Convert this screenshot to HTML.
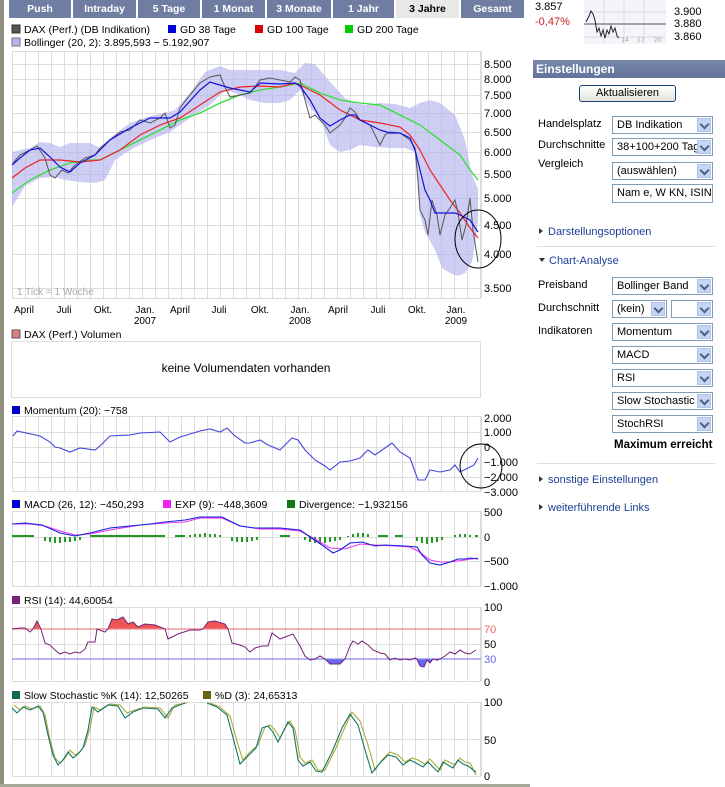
<!DOCTYPE html>
<html><head><meta charset="utf-8"><style>
*{margin:0;padding:0;box-sizing:border-box}
body{width:725px;height:787px;background:#fff;font-family:"Liberation Sans",sans-serif;font-size:11px;color:#000;position:relative;overflow:hidden}
.abs{position:absolute;white-space:nowrap}
.tab{position:absolute;top:0;height:18px;background:#6f7da3;color:#fff;font-weight:bold;font-size:10.5px;text-align:center;line-height:18px}
.tab.act{background:#e8e8e8;color:#000}
.lbl{position:absolute;font-size:11px;color:#000}
.sel{position:absolute;height:18px;border:1px solid #7f9db9;background:#fff;font-size:11px;line-height:16px;padding-left:4px;overflow:hidden;white-space:nowrap}
.sel i{position:absolute;right:1px;top:1px;width:14px;height:14px;background:#c6d4f6;border:1px solid #b0c1ea}
.sel i:after{content:"";position:absolute;left:3px;top:2px;width:5px;height:5px;border-right:2px solid #4d6185;border-bottom:2px solid #4d6185;transform:rotate(45deg)}
.link{position:absolute;color:#1c3f95;font-size:11px}
.link:before{content:"";display:inline-block;border-left:4px solid #334;border-top:3px solid transparent;border-bottom:3px solid transparent;margin-right:5px;vertical-align:1px}
.hr{position:absolute;left:537px;width:178px;height:1px;background:#ddd}
</style></head><body>
<div class="abs" style="left:0;top:0;width:4px;height:787px;background:#8f8f80"></div>
<div class="abs" style="left:0;top:784px;width:530px;height:3px;background:#a8a89a"></div>
<div class="tab" style="left:9px;width:62px">Push</div>
<div class="tab" style="left:73px;width:63px">Intraday</div>
<div class="tab" style="left:138px;width:62px">5 Tage</div>
<div class="tab" style="left:202px;width:63px">1 Monat</div>
<div class="tab" style="left:267px;width:64px">3 Monate</div>
<div class="tab" style="left:333px;width:61px">1 Jahr</div>
<div class="tab act" style="left:396px;width:63px">3 Jahre</div>
<div class="tab" style="left:461px;width:63px">Gesamt</div>

<svg class="abs" style="left:0;top:0" width="530" height="787" font-family="Liberation Sans, sans-serif" font-size="10.5">
<defs>
<pattern id="vg" x="12" y="0" width="13" height="10" patternUnits="userSpaceOnUse"><rect x="0" y="0" width="1" height="10" fill="#dcdcdc"/></pattern>
</defs>
<rect x="12" y="25" width="8" height="8" fill="#555" stroke="#333"/><text x="24" y="33">DAX (Perf.) (DB Indikation)</text>
<rect x="168" y="25" width="8" height="8" fill="#0000dd"/><text x="180" y="33">GD 38 Tage</text>
<rect x="255" y="25" width="8" height="8" fill="#dd0000"/><text x="267" y="33">GD 100 Tage</text>
<rect x="345" y="25" width="8" height="8" fill="#00cc00"/><text x="357" y="33">GD 200 Tage</text>
<rect x="12" y="38" width="8" height="8" fill="#b8b8f0" stroke="#777"/><text x="24" y="46">Bollinger (20, 2): 3.895,593 − 5.192,907</text>

<rect x="12" y="51" width="469" height="247" fill="url(#vg)"/>
<g stroke="#dcdcdc" stroke-width="1">
<line x1="12" x2="481" y1="51.5" y2="51.5"/><line x1="12" x2="481" y1="64.5" y2="64.5"/><line x1="12" x2="481" y1="79.5" y2="79.5"/><line x1="12" x2="481" y1="95.5" y2="95.5"/><line x1="12" x2="481" y1="113.5" y2="113.5"/><line x1="12" x2="481" y1="132.5" y2="132.5"/><line x1="12" x2="481" y1="152.5" y2="152.5"/><line x1="12" x2="481" y1="174.5" y2="174.5"/><line x1="12" x2="481" y1="198.5" y2="198.5"/><line x1="12" x2="481" y1="225.5" y2="225.5"/><line x1="12" x2="481" y1="254.5" y2="254.5"/><line x1="12" x2="481" y1="288.5" y2="288.5"/><line x1="12" x2="481" y1="298.5" y2="298.5"/><line x1="481.5" x2="481.5" y1="51" y2="298"/>
</g>
<polygon fill="#b4b4ee" fill-opacity="0.65" points="12,152 30,148 40,142 50,143 60,147 70,143 90,143 100,148 110,138 130,123 150,116 165,113 175,110 190,93 205,72 220,66 230,70 250,70 280,70 295,73 305,63 315,64 330,82 345,98 355,103 365,105 380,103 395,104 410,108 420,103 430,100 440,103 455,115 465,140 472,175 478,189 478,222 472,262 465,273 458,276 450,273 442,268 435,250 425,232 420,215 415,152 405,148 390,148 375,147 360,145 350,150 340,152 330,145 320,118 310,108 300,90 290,100 280,103 265,103 250,100 235,93 225,90 210,105 190,118 170,132 150,140 130,150 115,160 105,180 95,183 80,182 65,180 55,177 40,178 25,186 12,207"/>
<polyline fill="none" stroke="#33dd33" stroke-width="1.3" points="12,193 30,180 50,170 70,163 90,160 100,160 120,150 140,140 160,130 180,120 200,113 220,103 240,95 260,90 280,87 300,83 320,93 340,100 360,103 380,105 400,115 420,125 440,140 460,155 470,170 478,180"/>
<polyline fill="none" stroke="#ee2222" stroke-width="1.2" points="12,178 25,168 40,160 60,160 80,162 100,160 120,150 140,135 160,125 180,118 200,105 220,92 240,87 260,86 280,87 295,83 300,85 320,95 340,110 360,120 380,123 400,127 410,135 420,150 430,170 440,185 450,200 460,213 470,228 478,238"/>
<polyline fill="none" stroke="#555" stroke-width="1" points="13,163 20,155 30,150 37,146 45,158 50,175 55,178 62,170 68,173 75,165 85,158 95,155 100,148 110,140 120,132 130,130 140,120 150,123 160,118 165,113 170,128 175,125 180,108 190,95 200,83 210,77 220,75 225,87 230,97 240,95 250,93 260,80 270,78 280,80 290,82 295,77 300,80 305,100 310,118 315,115 320,120 325,125 330,133 340,125 345,118 350,108 355,112 360,120 370,125 380,145 385,135 390,132 400,133 410,140 415,148 418,180 420,210 425,220 428,235 432,200 437,215 440,235 445,215 450,208 455,200 458,213 462,240 466,225 470,198 473,230 478,262"/>
<polyline fill="none" stroke="#1111dd" stroke-width="1.2" points="12,165 20,158 30,150 40,148 50,157 60,167 70,172 80,163 95,155 110,140 130,128 150,118 170,118 180,112 200,90 210,82 230,88 250,92 260,83 280,84 295,83 300,86 310,100 320,118 330,126 340,120 350,115 355,115 360,120 370,125 380,130 390,133 400,133 410,138 415,150 420,170 425,190 430,200 435,213 445,213 455,213 460,215 470,220 478,232"/>
<ellipse cx="478" cy="239" rx="23" ry="29" fill="none" stroke="#000" stroke-width="1"/>
<text x="17" y="295" fill="#aaa" font-size="10">1 Tick = 1 Woche</text>
<g font-size="11"><text x="484" y="68">8.500</text><text x="484" y="83">8.000</text><text x="484" y="99">7.500</text><text x="484" y="117">7.000</text><text x="484" y="136">6.500</text><text x="484" y="156">6.000</text><text x="484" y="178">5.500</text><text x="484" y="202">5.000</text><text x="484" y="229">4.500</text><text x="484" y="258">4.000</text><text x="484" y="292">3.500</text></g>
<g font-size="10" text-anchor="middle"><text x="24" y="313">April</text><text x="64" y="313">Juli</text><text x="103" y="313">Okt.</text><text x="145" y="313">Jan.</text><text x="145" y="324">2007</text><text x="180" y="313">April</text><text x="219" y="313">Juli</text><text x="260" y="313">Okt.</text><text x="300" y="313">Jan.</text><text x="300" y="324">2008</text><text x="338" y="313">April</text><text x="378" y="313">Juli</text><text x="417" y="313">Okt.</text><text x="456" y="313">Jan.</text><text x="456" y="324">2009</text></g>

<rect x="12" y="330" width="8" height="8" fill="#d98080" stroke="#555"/><text x="24" y="338">DAX (Perf.) Volumen</text>
<rect x="11.5" y="341.5" width="469" height="56" fill="none" stroke="#ddd"/>
<text x="246" y="372" text-anchor="middle" font-size="12">keine Volumendaten vorhanden</text>

<rect x="12" y="406" width="8" height="8" fill="#0000cc"/><text x="24" y="414">Momentum (20): −758</text>
<rect x="12" y="416" width="469" height="76" fill="url(#vg)"/>
<g stroke="#dcdcdc"><line x1="12" x2="481" y1="416.5" y2="416.5"/><line x1="12" x2="481" y1="432.5" y2="432.5"/><line x1="12" x2="481" y1="447.5" y2="447.5"/><line x1="12" x2="481" y1="462.5" y2="462.5"/><line x1="12" x2="481" y1="477.5" y2="477.5"/><line x1="12" x2="481" y1="491.5" y2="491.5"/><line x1="481.5" x2="481.5" y1="416" y2="492"/></g>
<polyline fill="none" stroke="#4444dd" stroke-width="1.1" points="13,436 17,431 40,436 50,442 55,447 60,448 70,452 80,448 95,450 100,446 110,436 130,435 140,433 160,432 170,442 180,437 200,431 210,429 220,432 227,428 235,436 245,443 250,443 260,440 268,445 280,450 292,438 298,440 305,450 315,460 325,466 330,470 340,462 350,461 360,458 368,450 375,455 385,448 392,443 400,452 410,458 418,480 425,480 430,470 440,472 450,470 455,465 460,472 470,467 474,465 478,458"/>
<ellipse cx="481" cy="466" rx="21" ry="22" fill="none" stroke="#000"/>
<g font-size="11"><text x="484" y="422">2.000</text><text x="484" y="436">1.000</text><text x="484" y="451">0</text><text x="484" y="466">−1.000</text><text x="484" y="481">−2.000</text><text x="484" y="496">−3.000</text></g>

<rect x="12" y="500" width="8" height="8" fill="#0000dd"/><text x="24" y="508">MACD (26, 12): −450,293</text>
<rect x="163" y="500" width="8" height="8" fill="#ee22ee"/><text x="175" y="508">EXP (9): −448,3609</text>
<rect x="287" y="500" width="8" height="8" fill="#117711"/><text x="299" y="508">Divergence: −1,932156</text>
<rect x="12" y="511" width="469" height="76" fill="url(#vg)"/>
<g stroke="#dcdcdc"><line x1="12" x2="481" y1="511.5" y2="511.5"/><line x1="12" x2="481" y1="537.5" y2="537.5"/><line x1="12" x2="481" y1="561.5" y2="561.5"/><line x1="12" x2="481" y1="586.5" y2="586.5"/><line x1="481.5" x2="481.5" y1="511" y2="587"/></g>
<g stroke="#229922" stroke-width="2">
<path d="M12,536h22M45,537v4M50,537v5M55,537v6M60,537v6M65,537v5M70,537v5M75,537v4M80,537v3M90,536h75M175,536h10M190,535v2M195,534v3M200,534v3M205,533v4M210,534v3M215,534v3M220,535v2M232,537v4M237,537v5M242,537v5M247,537v5M252,537v4M257,537v3M280,536h10M305,537v3M310,537v5M315,537v6M320,537v7M325,537v6M330,537v5M335,537v4M340,537v3M348,536v1M353,534v3M358,533v4M363,533v4M368,534v3M378,536h10M395,536h8M417,537v4M422,537v6M427,537v7M432,537v6M437,537v5M442,537v3M455,535v2M460,534v3M465,534v3M470,535v2M475,536h3"/>
</g>
<polyline fill="none" stroke="#ee33ee" stroke-width="1.1" points="12,524 30,524 45,526 60,531 75,535 90,534 110,530 140,525 165,523 185,522 200,518 222,518 240,526 260,529 280,529 300,531 315,539 330,548 345,549 360,544 375,545 395,546 410,547 418,551 430,560 440,562 450,562 465,560 478,558"/>
<polyline fill="none" stroke="#1122dd" stroke-width="1.1" points="12,524 25,523 42,525 60,533 75,536 90,533 110,528 130,526 150,524 165,522 185,520 200,517 222,517 240,526 255,528 280,528 300,530 313,539 322,545 333,553 340,550 350,543 362,542 375,546 385,545 405,546 417,547 422,555 430,563 440,565 450,562 458,559 465,559 470,558 478,559"/>
<g font-size="11"><text x="484" y="516">500</text><text x="484" y="541">0</text><text x="484" y="565">−500</text><text x="484" y="590">−1.000</text></g>

<rect x="12" y="596" width="8" height="8" fill="#772277"/><text x="24" y="604">RSI (14): 44,60054</text>
<rect x="12" y="607" width="469" height="75" fill="url(#vg)"/>
<g stroke="#dcdcdc"><line x1="12" x2="481" y1="607.5" y2="607.5"/><line x1="12" x2="481" y1="644.5" y2="644.5"/><line x1="12" x2="481" y1="681.5" y2="681.5"/><line x1="481.5" x2="481.5" y1="607" y2="682"/></g>
<path fill="#ee5555" d="M33,629L37,621L41,629ZM108,629L112,619L117,620L123,617L128,624L133,622L138,627L145,624L155,625L165,629ZM203,629L208,622L215,621L225,624L228,629Z"/>
<path fill="#6666ee" d="M325,659L330,664L340,664L345,659ZM417,659L420,666L424,667L427,660L430,663L433,659ZM434,659L438,661L440,659Z"/>
<line x1="12" x2="481" y1="629" y2="629" stroke="#f08888" stroke-width="1.3"/>
<line x1="12" x2="481" y1="659" y2="659" stroke="#8888ee" stroke-width="1.3"/>
<polyline fill="none" stroke="#772277" stroke-width="1" points="12,629 20,628 25,628 30,632 33,629 37,621 41,629 45,643 50,645 55,650 60,654 65,652 70,654 75,652 80,653 85,649 88,642 95,642 97,629 105,632 108,629 112,619 117,620 123,617 128,624 133,622 138,627 145,624 155,625 165,629 168,639 172,637 178,634 190,630 200,630 203,629 208,622 215,621 225,624 228,629 232,643 240,645 245,647 250,652 255,648 262,646 268,646 272,633 280,639 285,637 293,634 300,646 305,656 310,660 315,659 320,656 325,659 330,664 340,664 345,659 350,646 353,641 358,644 362,641 368,645 373,650 380,653 385,654 390,660 395,658 400,660 405,659 410,660 415,658 417,659 420,666 424,667 427,660 430,663 433,659 436,660 440,659 445,656 450,652 455,654 460,650 465,653 470,654 476,650"/>
<g font-size="11"><text x="484" y="611">100</text><text x="484" y="633" fill="#ee6666">70</text><text x="484" y="648">50</text><text x="484" y="663" fill="#6666ee">30</text><text x="484" y="686">0</text></g>

<rect x="12" y="691" width="8" height="8" fill="#116655"/><text x="24" y="699">Slow Stochastic %K (14): 12,50265</text>
<rect x="203" y="691" width="8" height="8" fill="#666611"/><text x="215" y="699">%D (3): 24,65313</text>
<rect x="12" y="702" width="469" height="74" fill="url(#vg)"/>
<g stroke="#dcdcdc"><line x1="12" x2="481" y1="702.5" y2="702.5"/><line x1="12" x2="481" y1="739.5" y2="739.5"/><line x1="12" x2="481" y1="776.5" y2="776.5"/><line x1="481.5" x2="481.5" y1="702" y2="776"/></g>
<g fill="none" stroke-width="1.1">
<polyline stroke="#aaaa33" points="14,705 20,710 25,706 32,709 40,706 45,715 50,740 55,758 60,763 65,758 70,750 75,755 80,752 85,745 90,728 94,707 100,710 110,704 120,705 127,713 135,710 145,707 160,708 168,718 175,705 187,703"/>
<polyline stroke="#aaaa33" points="210,703 220,707 230,716 238,745 243,760 250,752 258,745 265,727 270,725 275,730 280,738 285,728 290,721 295,730 300,757 305,763 312,760 318,770 325,770 335,750 345,727 352,712 360,721 368,745 375,770 382,760 390,752 398,755 405,762 412,758 418,760 425,764 430,759 440,770 445,760 455,765 460,758 465,762 470,763 476,775"/>
<polyline stroke="#117766" points="12,708 17,713 23,707 30,710 38,706 43,712 48,735 53,755 58,765 63,760 68,752 73,758 78,754 83,748 88,730 92,707 98,712 108,705 118,706 125,718 133,712 143,708 158,709 165,718 172,708 185,703"/>
<polyline stroke="#117766" points="207,703 217,707 227,715 235,745 240,764 248,756 256,748 262,728 268,726 273,732 278,742 283,732 288,722 293,728 298,760 303,766 310,762 316,771 322,772 332,752 342,728 350,714 358,725 365,750 372,773 380,763 388,755 396,757 403,765 410,760 416,763 423,767 428,762 438,772 443,762 453,768 458,760 463,764 468,766 476,772"/>
</g>
<g font-size="11"><text x="484" y="706">100</text><text x="484" y="744">50</text><text x="484" y="780">0</text></g>
</svg>

<div class="lbl" style="left:535px;top:1px">3.857</div>
<div class="lbl" style="left:535px;top:16px;color:#cc2222">-0,47%</div>
<svg class="abs" style="left:584px;top:0" width="130" height="46" font-family="Liberation Sans, sans-serif">
<rect x="0" y="0" width="82" height="44" fill="#f4f4fa"/>
<g stroke="#ddd"><line x1="20" x2="20" y1="0" y2="44"/><line x1="40" x2="40" y1="0" y2="44"/><line x1="60" x2="60" y1="0" y2="44"/><line x1="0" x2="82" y1="12" y2="12"/><line x1="0" x2="82" y1="37" y2="37"/></g>
<line x1="0" x2="82" y1="24" y2="24" stroke="#888" stroke-width="1.5"/>
<polyline fill="none" stroke="#223" points="2,22 5,16 7,11 9,14 11,20 13,32 15,28 17,36 19,30 21,38 23,30 25,34 27,26 29,32 31,28 33,36 35,38"/>
<g font-size="7" fill="#aaa"><text x="37" y="42">14</text><text x="53" y="42">17</text><text x="70" y="42">20</text></g>
<g font-size="11"><text x="90" y="15">3.900</text><text x="90" y="27">3.880</text><text x="90" y="40">3.860</text></g>
</svg>
<div class="abs" style="left:533px;top:60px;width:192px;height:18px;background:linear-gradient(#7888ad,#63739a);color:#fff;font-weight:bold;font-size:12px;line-height:18px;padding-left:3px">Einstellungen</div>
<div class="abs" style="left:579px;top:85px;width:97px;height:17px;border:1px solid #1c3f75;border-radius:3px;background:linear-gradient(#fff,#e4e4dc);text-align:center;line-height:15px;font-size:11px">Aktualisieren</div>
<div class="lbl" style="left:538px;top:118px">Handelsplatz</div>
<div class="sel" style="left:612px;top:116px;width:101px">DB Indikation<i></i></div>
<div class="lbl" style="left:538px;top:139px">Durchschnitte</div>
<div class="sel" style="left:612px;top:138px;width:101px">38+100+200 Tage<i></i></div>
<div class="lbl" style="left:538px;top:158px">Vergleich</div>
<div class="sel" style="left:612px;top:162px;width:101px">(auswählen)<i></i></div>
<div class="sel" style="left:612px;top:184px;width:101px;height:19px;border-color:#7f9db9">Nam e, W KN, ISIN</div>
<div class="link" style="left:539px;top:226px">Darstellungsoptionen</div>
<div class="hr" style="top:246px"></div>
<div class="abs" style="left:539px;top:255px;color:#1c3f95"><span style="display:inline-block;border-top:4px solid #334;border-left:3px solid transparent;border-right:3px solid transparent;margin-right:4px;vertical-align:2px"></span>Chart-Analyse</div>
<div class="lbl" style="left:538px;top:279px">Preisband</div>
<div class="sel" style="left:612px;top:277px;width:101px">Bollinger Band<i></i></div>
<div class="lbl" style="left:538px;top:302px">Durchschnitt</div>
<div class="sel" style="left:612px;top:300px;width:55px">(kein)<i></i></div>
<div class="sel" style="left:671px;top:300px;width:42px"><i></i></div>
<div class="lbl" style="left:538px;top:325px">Indikatoren</div>
<div class="sel" style="left:612px;top:323px;width:101px">Momentum<i></i></div>
<div class="sel" style="left:612px;top:346px;width:101px">MACD<i></i></div>
<div class="sel" style="left:612px;top:369px;width:101px">RSI<i></i></div>
<div class="sel" style="left:612px;top:392px;width:101px">Slow Stochastic<i></i></div>
<div class="sel" style="left:612px;top:415px;width:101px">StochRSI<i></i></div>
<div class="abs" style="left:614px;top:439px;font-weight:bold;font-size:11.5px">Maximum erreicht</div>
<div class="hr" style="top:463px"></div>
<div class="link" style="left:539px;top:474px">sonstige Einstellungen</div>
<div class="link" style="left:539px;top:502px">weiterführende Links</div>
</body></html>
